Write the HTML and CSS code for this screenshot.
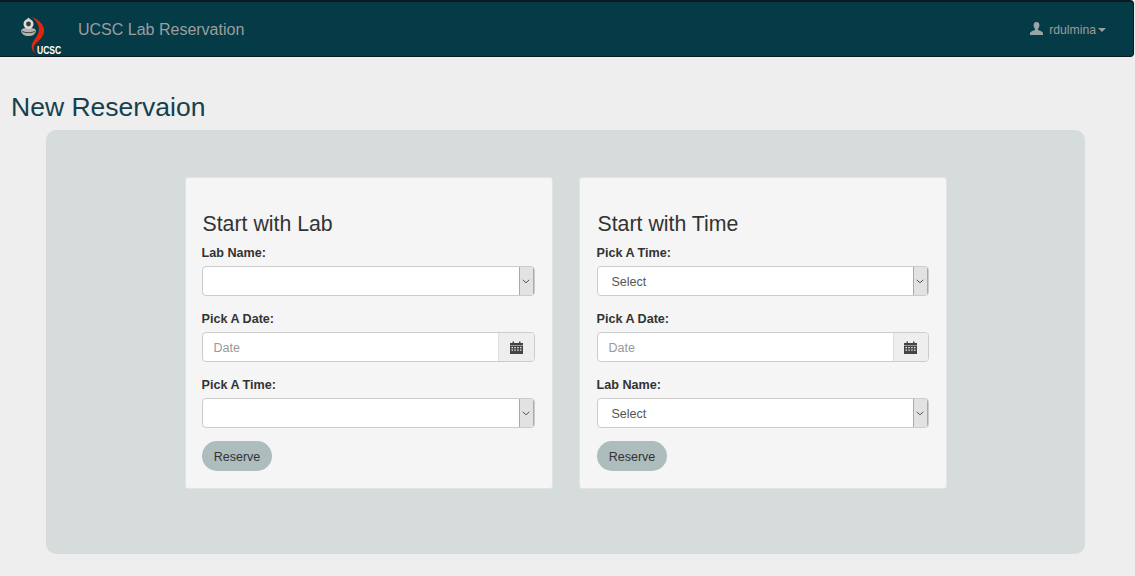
FILE: index.html
```html
<!DOCTYPE html>
<html lang="en">
<head>
  <meta charset="UTF-8" />
  <title>UCSC Lab Reservation</title>
  <link rel="stylesheet" href="styles.css">
</head>
<body>
  <nav class="navbar">
    <div class="brand">
      <div class="logo">
        <svg width="44" height="54" viewBox="0 0 44 54">
          <path d="M22 15 C30 18 35 24 34 30 C33 37 26 40 24 44 C23.300 47 24 49 25 51 C22 49 21 45 22 42 C24 37 29 33 29 27 C29 22 25 18 22 15 Z" fill="#e0260f"/>
          <path d="M11 29 C12 26 14 26 18.500 26 C23 26 25 26 26 29 C25 33 22 34 18.500 34 C15 34 12 33 11 29 Z" fill="#b4b5ae"/>
          <path d="M12 29.500 C15 31 22 31 25 29.500" fill="none" stroke="#44453f" stroke-width="1"/>
          <circle cx="18.500" cy="22" r="5" fill="#dcddd8"/>
          <circle cx="18.500" cy="22" r="2.400" fill="#3a3a36"/>
          <path d="M16.500 17.500 L18.500 15.500 L20.500 17.500 Z" fill="#cfd0ca"/>
        </svg>
        <span class="logo-text">UCSC</span>
      </div>
      <span class="brand-name">UCSC Lab Reservation</span>
    </div>
    <div class="user">
      <svg class="user-icon" width="13" height="13" viewBox="0 0 13 13"><path d="M6.500 0 C8.600 0 9.600 1.600 9.400 3.600 C9.300 5 8.700 6.200 8 7 L8 8 C10 8.800 12.600 9.400 13 11 L13 13 L0 13 L0 11 C.4 9.400 3 8.800 5 8 L5 7 C4.300 6.200 3.700 5 3.600 3.600 C3.400 1.600 4.400 0 6.500 0 Z" fill="#9aa5a7"/></svg>
      <span class="user-name">rdulmina</span>
      <span class="caret"></span>
    </div>
  </nav>

  <h1 class="page-title">New Reservaion</h1>

  <div class="panel">
    <form class="card card-left">
      <h3>Start with Lab</h3>
      <label>Lab Name:</label>
      <div class="select-box">
        <span class="select-value"></span>
        <span class="select-arrow"><svg width="8" height="5" viewBox="0 0 8 5"><path d="M.7 .8 L4 3.800 L7.300 .8" fill="none" stroke="#555" stroke-width="1"/></svg></span>
      </div>
      <label>Pick A Date:</label>
      <div class="date-box">
        <span class="date-value">Date</span>
        <span class="date-addon">
          <svg width="13" height="13" viewBox="0 0 13 13"><path d="M0 2 H2.500 V.5 H4 V2 H9 V.5 H10.500 V2 H13 V4.500 H0 Z" fill="#444"/><path d="M0 5 H13 V13 H0 Z M1.500 6 V7.300 H3 V6 Z M4.300 6 V7.300 H5.800 V6 Z M7.200 6 V7.300 H8.700 V6 Z M10 6 V7.300 H11.500 V6 Z M1.500 8.400 V9.700 H3 V8.400 Z M4.300 8.400 V9.700 H5.800 V8.400 Z M7.200 8.400 V9.700 H8.700 V8.400 Z M10 8.400 V9.700 H11.500 V8.400 Z" fill="#444" fill-rule="evenodd"/></svg>
        </span>
      </div>
      <label>Pick A Time:</label>
      <div class="select-box">
        <span class="select-value"></span>
        <span class="select-arrow"><svg width="8" height="5" viewBox="0 0 8 5"><path d="M.7 .8 L4 3.800 L7.300 .8" fill="none" stroke="#555" stroke-width="1"/></svg></span>
      </div>
      <button type="button" class="btn-reserve">Reserve</button>
    </form>

    <form class="card">
      <h3>Start with Time</h3>
      <label>Pick A Time:</label>
      <div class="select-box">
        <span class="select-value">Select</span>
        <span class="select-arrow"><svg width="8" height="5" viewBox="0 0 8 5"><path d="M.7 .8 L4 3.800 L7.300 .8" fill="none" stroke="#555" stroke-width="1"/></svg></span>
      </div>
      <label>Pick A Date:</label>
      <div class="date-box">
        <span class="date-value">Date</span>
        <span class="date-addon">
          <svg width="13" height="13" viewBox="0 0 13 13"><path d="M0 2 H2.500 V.5 H4 V2 H9 V.5 H10.500 V2 H13 V4.500 H0 Z" fill="#444"/><path d="M0 5 H13 V13 H0 Z M1.500 6 V7.300 H3 V6 Z M4.300 6 V7.300 H5.800 V6 Z M7.200 6 V7.300 H8.700 V6 Z M10 6 V7.300 H11.500 V6 Z M1.500 8.400 V9.700 H3 V8.400 Z M4.300 8.400 V9.700 H5.800 V8.400 Z M7.200 8.400 V9.700 H8.700 V8.400 Z M10 8.400 V9.700 H11.500 V8.400 Z" fill="#444" fill-rule="evenodd"/></svg>
        </span>
      </div>
      <label>Lab Name:</label>
      <div class="select-box">
        <span class="select-value">Select</span>
        <span class="select-arrow"><svg width="8" height="5" viewBox="0 0 8 5"><path d="M.7 .8 L4 3.800 L7.300 .8" fill="none" stroke="#555" stroke-width="1"/></svg></span>
      </div>
      <button type="button" class="btn-reserve">Reserve</button>
    </form>
  </div>
</body>
</html>
```

FILE: styles.css
```css
* {
  box-sizing: border-box;
}

body {
  margin: 0;
  height: 576px;
  overflow: hidden;
  background: #eeeeee;
  font-family: "Liberation Sans", Arial, sans-serif;
  color: #333;
}

.navbar {
  display: flex;
  align-items: center;
  justify-content: space-between;
  width: 1134px;
  height: 57px;
  padding: 0 27px 0 0;
  background: #053b47;
  border-top: 2px solid #0a1a1e;
  border-right: 1px solid #0a1a1e;
  border-bottom: 1px solid #0a1a1e;
  border-bottom-right-radius: 4px;
  border-top-right-radius: 4px;
}

.brand {
  display: flex;
  align-items: center;
  height: 100%;
}

.logo {
  position: relative;
  width: 78px;
  height: 54px;
  padding-left: 10px;
}

.logo svg {
  display: block;
}

.logo-text {
  position: absolute;
  left: 37px;
  bottom: 0;
  color: #fff;
  font-size: 9px;
  font-weight: bold;
  line-height: 10px;
  transform: scale(.95, 1.2);
  transform-origin: left bottom;
}

.brand-name {
  padding-top: 2px;
  color: #9d9d9d;
  font-size: 16px;
}

.user {
  display: flex;
  align-items: center;
  color: #9d9d9d;
  font-size: 12.2px;
}

.user-icon {
  margin-top: -2px;
}

.user-name {
  margin-left: 6px;
  padding-top: 2px;
}

.caret {
  width: 0;
  height: 0;
  margin-top: 1px;
  margin-left: 2px;
  border-top: 4px solid #9d9d9d;
  border-left: 4px solid transparent;
  border-right: 4px solid transparent;
}

.page-title {
  margin: 36px 0 8px 11px;
  color: #15414c;
  font-size: 26.5px;
  font-weight: 500;
  line-height: 29px;
}

.panel {
  display: flex;
  justify-content: center;
  gap: 26px;
  width: 1039px;
  height: 424px;
  margin-left: 46px;
  padding-top: 47px;
  background: #d6dcdc;
  border-radius: 10px;
}

.card {
  width: 368px;
  height: 312px;
  padding: 33px 17px 0;
  background: #f5f5f5;
  border: 1px solid #e3e3e3;
  border-radius: 3px;
}

.card-left {
  padding-left: 16px;
}

.card h3 {
  margin: 1px 0 10px;
  padding-left: 1px;
  font-size: 21.3px;
  font-weight: 500;
  line-height: 24px;
}

.card label {
  display: block;
  margin-bottom: 6px;
  font-size: 12.6px;
  font-weight: bold;
  line-height: 14px;
}

.select-box,
.date-box {
  display: flex;
  height: 30px;
  margin-bottom: 16px;
  background: #fff;
  border: 1px solid #ccc;
  border-radius: 4px;
  overflow: hidden;
  font-size: 12.5px;
}

.select-value {
  flex: 1;
  padding-left: 14px;
  line-height: 30px;
  color: #555;
}

.select-arrow {
  display: flex;
  align-items: center;
  justify-content: center;
  width: 15px;
  background: #e2e2e2;
  border-left: 1px solid #aaa;
  border-right: 1px solid #aaa;
}

.date-value {
  flex: 1;
  padding-left: 11px;
  line-height: 30px;
  color: #999;
}

.date-addon {
  display: flex;
  align-items: center;
  justify-content: center;
  width: 35px;
  background: #eee;
  border-left: 1px solid #ddd;
}

.card-left .date-addon {
  width: 36px;
}

.btn-reserve {
  display: block;
  width: 70px;
  height: 30px;
  margin-top: -3px;
  padding: 2px 0 0 1px;
  background: #adbcbc;
  border: none;
  border-radius: 15px;
  color: #333;
  font-family: inherit;
  font-size: 12.5px;
}
```
